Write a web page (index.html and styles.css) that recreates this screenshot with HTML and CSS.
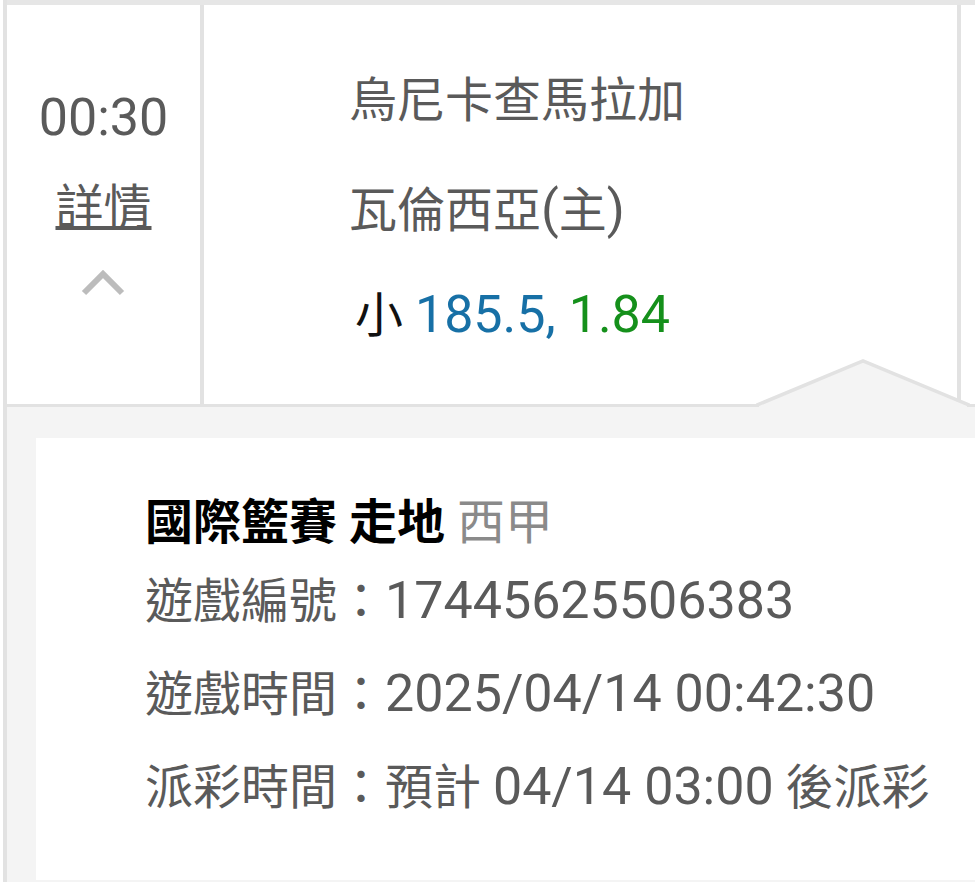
FILE: index.html
```html
<!DOCTYPE html>
<html lang="zh-Hant">
<head>
<meta charset="utf-8">
<title>Bet detail</title>
<link rel="stylesheet" href="styles.css">
</head>
<body>
<div class="page">
  <div class="board">
    <div class="row">
      <div class="cell time-cell">
        <div class="time"><span class="num">00:30</span></div>
        <a class="detail-link">詳情</a>
        <svg class="chevron" width="46" height="28" viewBox="0 0 46 28"><polyline points="3,24 22,5 41,24" fill="none" stroke="#bcbcbc" stroke-width="6"/></svg>
      </div>
      <div class="cell teams-cell">
        <div class="line line-1">烏尼卡查馬拉加</div>
        <div class="line line-2">瓦倫西亞<span class="num">(</span>主<span class="num">)</span></div>
        <div class="line line-3"><span class="pick">小</span> <span class="num blue">185.5,</span> <span class="num green odds">1.84</span></div>
      </div>
      <div class="cell extra-cell"></div>
    </div>
    <div class="detail">
      <div class="card">
        <div class="title">國際籃賽 走地 <span class="league">西甲</span></div>
        <div class="info">遊戲編號：<span class="num">17445625506383</span></div>
        <div class="info">遊戲時間：<span class="num">2025/04/14 00:42:30</span></div>
        <div class="info">派彩時間：預計 <span class="num">04/14 03:00</span> 後派彩</div>
      </div>
    </div>
  </div>
  <svg class="notch" width="214" height="54" viewBox="0 0 214 54">
    <polygon points="3,47.5 107,3 211,47.5 211,54 3,54" fill="#f4f4f4"/>
    <polyline points="0,47.5 107,3 214,47.5" fill="none" stroke="#e2e2e2" stroke-width="3.5"/>
  </svg>
</div>
</body>
</html>
```

FILE: styles.css
```css
* { box-sizing: border-box; }
html, body { margin: 0; padding: 0; background: #ffffff; }
body {
  font-family: Roboto, "Noto Sans CJK TC", sans-serif;
  font-size: 48px;
  color: #5a5a5a;
}
.page {
  position: relative;
  width: 975px;
  height: 882px;
  overflow: hidden;
}
.board {
  margin-left: 3px;
  border-left: 4px solid #e2e2e2;
  height: 882px;
  display: flex;
  flex-direction: column;
}
.row {
  display: grid;
  grid-template-columns: 197px 757px 1fr;
  border-top: 5px solid #e6e6e6;
  height: 404px;
}
.cell { height: 399px; }
.time-cell {
  border-right: 4px solid #e2e2e2;
  display: flex;
  flex-direction: column;
  align-items: center;
  padding-top: 84px;
}
.teams-cell {
  border-right: 4px solid #e2e2e2;
  padding-left: 145px;
}
.num { font-size: 52px; line-height: 1; }
.time { line-height: 60px; font-family: Roboto, sans-serif; }
.detail-link {
  margin-top: 29px;
  line-height: 60px;
  text-decoration: underline;
  text-decoration-thickness: 4px;
  text-underline-offset: 2px;
  color: #5a5a5a;
}
.chevron { margin-top: 31px; display: block; }
.line { line-height: 60px; white-space: nowrap; }
.line-1 { margin-top: 66px; }
.line-2 { margin-top: 50px; }
.line-3 { margin-top: 45px; padding-left: 6px; }
.pick { color: #111111; }
.blue { color: #1770a6; }
.green { color: #15901b; }
.odds { margin-left: 1px; }
.detail {
  flex: 1;
  background: #f4f4f4;
  border-top: 3px solid #e2e2e2;
  padding: 31px 0 0 29px;
}
.card {
  background: #ffffff;
  height: 442px;
  padding: 55px 0 0 109px;
}
.title {
  line-height: 60px;
  font-weight: 700;
  color: #000000;
  white-space: nowrap;
  margin-bottom: 2px;
}
.league { font-weight: 400; color: #8a8a8a; }
.info { line-height: 93px; white-space: nowrap; }
.notch {
  position: absolute;
  left: 756px;
  top: 358px;
}
```
